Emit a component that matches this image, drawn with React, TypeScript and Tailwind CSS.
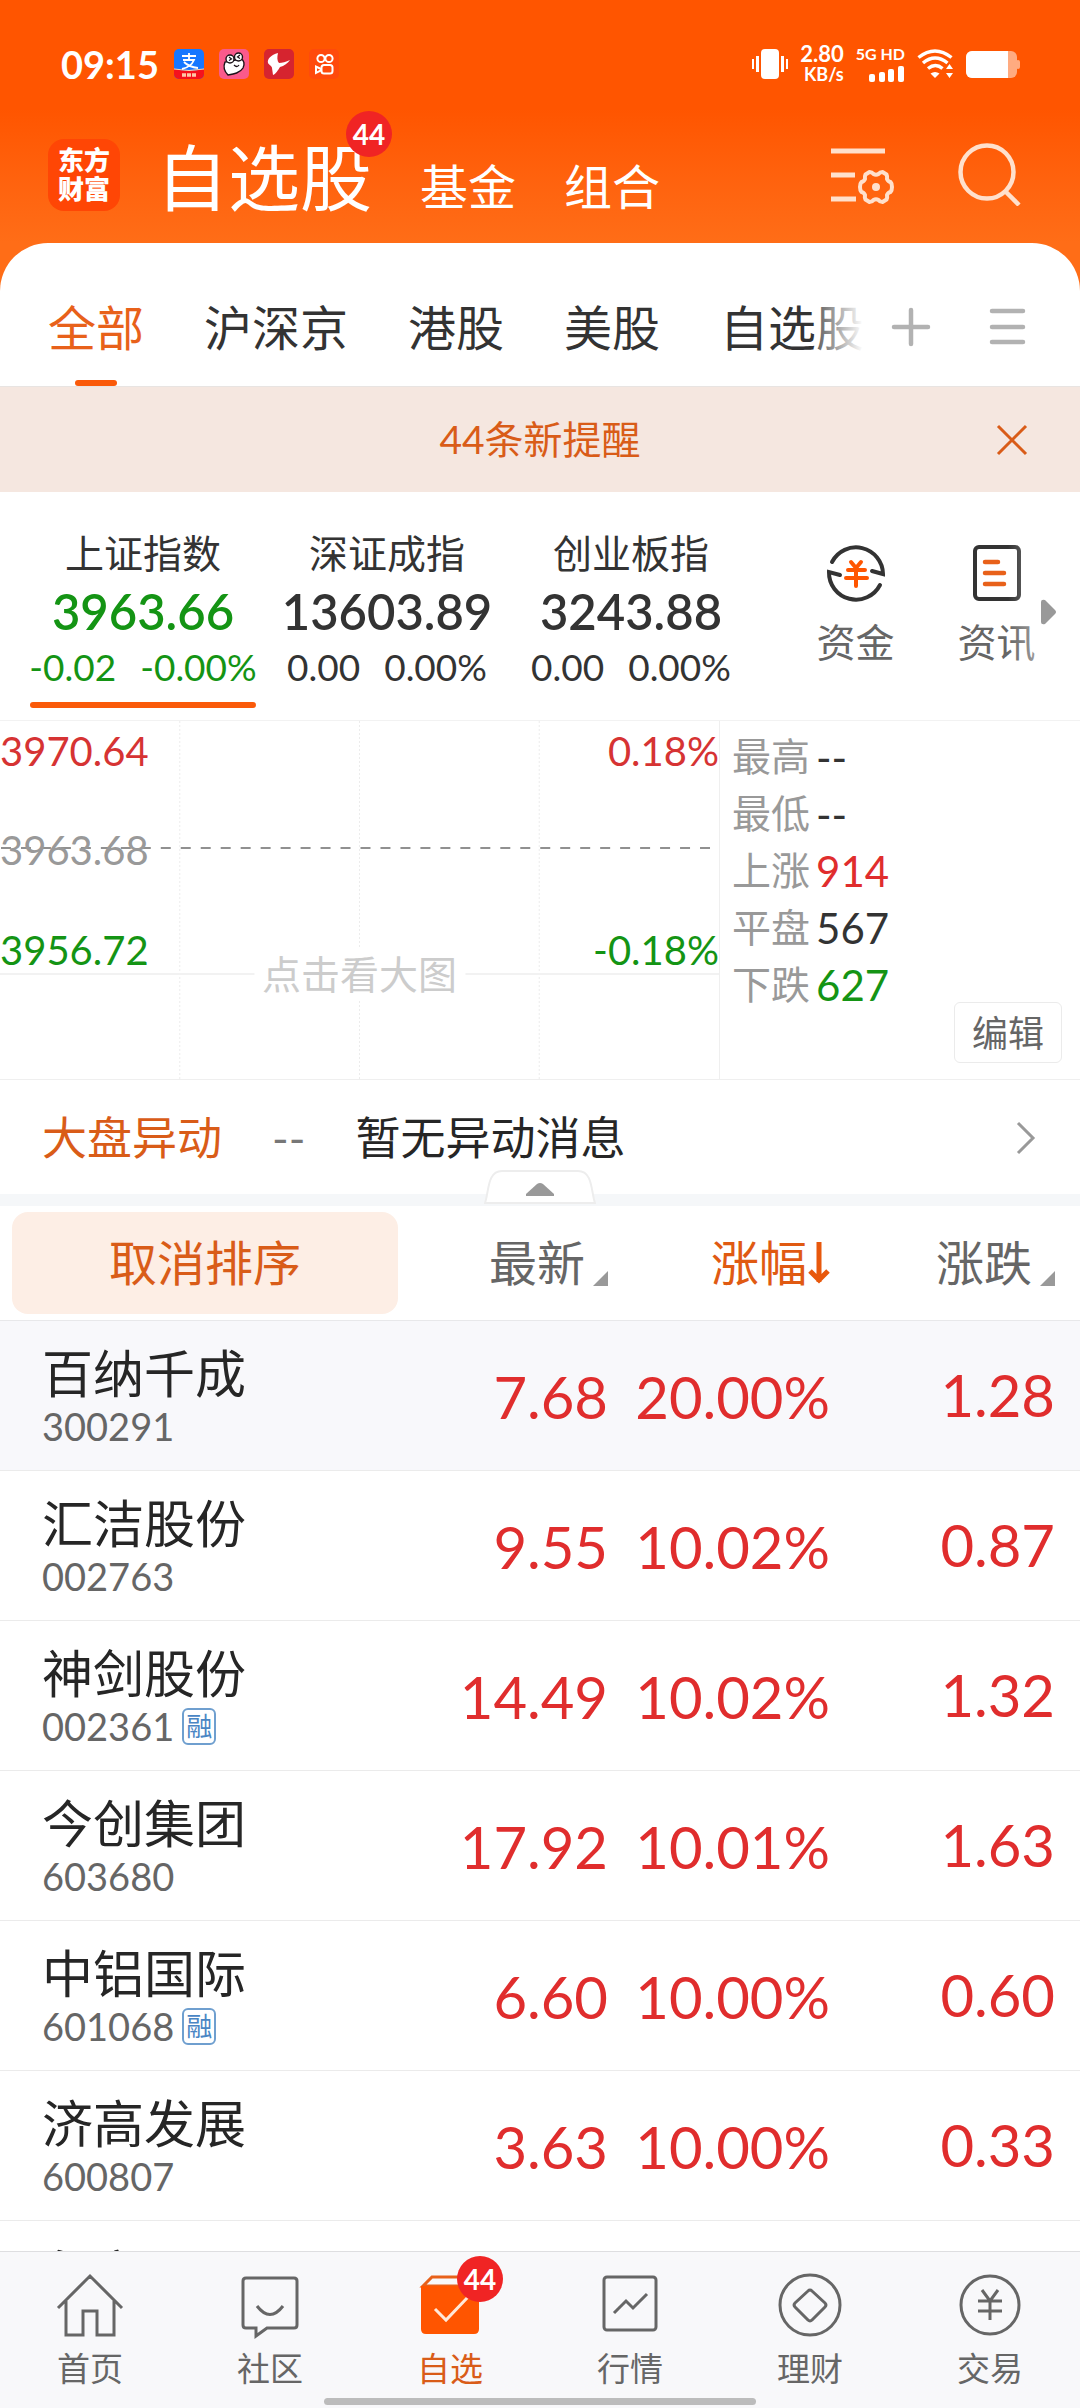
import type { ReactNode } from "react";
import { clsx } from "clsx";

type Stock = { name: string; code: string; price: string; percent: string; change: string; margin?: boolean };

const stocks: Stock[] = [
  { name: "百纳千成", code: "300291", price: "7.68", percent: "20.00%", change: "1.28" },
  { name: "汇洁股份", code: "002763", price: "9.55", percent: "10.02%", change: "0.87" },
  { name: "神剑股份", code: "002361", price: "14.49", percent: "10.02%", change: "1.32", margin: true },
  { name: "今创集团", code: "603680", price: "17.92", percent: "10.01%", change: "1.63" },
  { name: "中铝国际", code: "601068", price: "6.60", percent: "10.00%", change: "0.60", margin: true },
  { name: "济高发展", code: "600807", price: "3.63", percent: "10.00%", change: "0.33" },
  { name: "永安", code: "", price: "", percent: "", change: "" },
];

const indices = [
  { name: "上证指数", value: "3963.66", diff: "-0.02", percent: "-0.00%", active: true },
  { name: "深证成指", value: "13603.89", diff: "0.00", percent: "0.00%", active: false },
  { name: "创业板指", value: "3243.88", diff: "0.00", percent: "0.00%", active: false },
];

const marketStats = [
  { label: "最高", value: "--", color: "text-[#333333]" },
  { label: "最低", value: "--", color: "text-[#333333]" },
  { label: "上涨", value: "914", color: "text-[#e02d2d]" },
  { label: "平盘", value: "567", color: "text-[#333333]" },
  { label: "下跌", value: "627", color: "text-[#149414]" },
];

const tabs = ["全部", "沪深京", "港股", "美股", "自选股"];

function Badge({ children }: { children: ReactNode }) {
  return (
    <span className="absolute flex size-[46px] items-center justify-center rounded-full bg-[#f02424] text-[28px] leading-none font-bold text-white">
      {children}
    </span>
  );
}

function StatusBar() {
  return (
    <div className="flex h-32 items-center justify-between pr-[60px] pl-[61px] text-white">
      <div className="flex items-center gap-[15px]">
        <span className="text-[38px] leading-none font-bold">09:15</span>
        <svg width="30" height="30" viewBox="0 0 30 30">
          <rect width="30" height="30" rx="5" fill="#1677ff" />
          <path d="M0 20q15 3 30 0v5a5 5 0 0 1-5 5H5a5 5 0 0 1-5-5z" fill="#f5121d" />
          <path d="M0 20q15 3 30 0" stroke="#ffd9b0" strokeWidth="1" fill="none" />
          <path d="M8 7h14M15 4v7M9 11h11q-3 7-12 9M10 13q5 5 14 6" stroke="#fff" strokeWidth="1.8" fill="none" />
          <path d="M8 26h14" stroke="#ffc9a8" strokeWidth="3.5" strokeDasharray="4 1" />
        </svg>
        <svg width="30" height="30" viewBox="0 0 30 30">
          <rect width="30" height="30" rx="5" fill="#fa5a8c" />
          <path
            d="M6 13c-2 5-1 9 3 13 6-1 12-2 15-7 2-4 1-8-2-9z"
            fill="#fff"
            stroke="#1b1118"
            strokeWidth="1.4"
          />
          <circle cx="11" cy="10" r="4" fill="#fff" stroke="#1b1118" strokeWidth="1.4" />
          <circle cx="19.500" cy="8" r="4" fill="#fff" stroke="#1b1118" strokeWidth="1.4" />
          <path d="m10 8 2.500 2-2.500 1.500M21 6l-2.500 2 2.500 1.500" stroke="#1b1118" strokeWidth="1.200" fill="none" />
          <path d="M15 16q3 3 5 0" stroke="#1b1118" strokeWidth="1.300" fill="none" />
        </svg>
        <svg width="30" height="30" viewBox="0 0 30 30">
          <rect width="30" height="30" rx="5" fill="#d6242f" />
          <path d="M14 4C7 6 3 10 4 14c1 2 4 3 4 5l1 7c3-1 5-5 7-8 4-1 8-4 10-7-4 2-8 3-11 3-2-2-2-6-1-10z" fill="#fff" />
        </svg>
        <svg width="30" height="30" viewBox="0 0 30 30">
          <rect width="30" height="30" rx="5" fill="#ff4a0c" />
          <g fill="none" stroke="#fff" strokeWidth="2">
            <circle cx="12" cy="9.500" r="3.600" />
            <circle cx="20" cy="9.500" r="3.600" />
            <rect x="12.500" y="16" width="11" height="8.500" rx="2.500" />
            <path d="M12 20 7 17.500v6.500l5-2.500z" />
          </g>
        </svg>
      </div>

      <div className="flex items-center gap-3">
        <svg width="36" height="30" viewBox="0 0 36 30" fill="#fff">
          <rect x="9" width="18" height="30" rx="4" />
          <rect y="10" width="2" height="10" />
          <rect x="4" y="7" width="3" height="16" />
          <rect x="29" y="7" width="3" height="16" />
          <rect x="34" y="10" width="2" height="10" />
        </svg>
        <div className="text-right font-bold">
          <div className="text-[22px] leading-[20px]">2.80</div>
          <div className="text-[18px] leading-[20px]">KB/s</div>
        </div>
        <div className="flex flex-col items-end gap-1 text-[16px] leading-[16px] font-bold">
          5G HD
          <svg width="36" height="16" viewBox="0 0 36 16" fill="#fff">
            <rect y="8" width="6" height="8" rx="2" />
            <rect x="10" y="6" width="6" height="10" rx="2" />
            <rect x="19" y="3" width="6" height="13" rx="2" />
            <rect x="29" width="6" height="16" rx="2" />
          </svg>
        </div>
        <svg width="37" height="30" viewBox="0 0 37 30" fill="none" stroke="#fff" strokeWidth="3.500">
          <path d="M1.500 8.500q16.500-13 33 0" />
          <path d="M6 14q12-10 24.500 0" />
          <path d="M11 19.500q7.500-6 14.500 0" />
          <path d="M13.500 24.500 18 29l4.500-4.500q-4.500-3-9 0z" fill="#fff" stroke="none" />
          <path d="m32.500 15 3.500 5h-7zM32.500 29l3.500-5h-7z" fill="#fff" stroke="none" />
        </svg>
        <svg width="54" height="27" viewBox="0 0 54 27">
          <rect width="51" height="27" rx="6" fill="#ffab80" />
          <path d="M6 0h36v27H6a6 6 0 0 1-6-6V6a6 6 0 0 1 6-6z" fill="#fff" />
          <rect x="50" y="9" width="4" height="9" rx="2" fill="#ffab80" />
        </svg>
      </div>
    </div>
  );
}

function Header() {
  return (
    <header className="bg-linear-to-b from-[#ff5500] from-45% to-[#ff6d17]">
      <StatusBar />
      <div className="flex h-[115px] items-start justify-between pr-[58px] pl-12 text-white">
        <div className="flex">
          <div className="mt-[11px] flex size-[72px] flex-col items-center justify-center rounded-2xl bg-[#ff4605] text-[26px] leading-[29px] font-black">
            <span>东方</span>
            <span>财富</span>
          </div>
          <nav className="ml-9 flex items-baseline gap-12">
            <button className="relative text-[72px] leading-[98px]">
              自选股
              <span className="absolute -top-[17px] right-[26px]">
                <Badge>44</Badge>
              </span>
            </button>
            <button className="text-5xl">基金</button>
            <button className="text-5xl">组合</button>
          </nav>
        </div>
        <div className="mt-[14px] flex gap-16">
          <button aria-label="列表设置">
            <svg width="63" height="64" viewBox="0 0 63 64" fill="none" stroke="#ffe0cc" strokeWidth="5">
              <path d="M0 9h54M0 33h24M0 57h25" />
              <path
                d="M38.500 30q2.500 0 4 2 2.500 1.500 5 0 1.500-2 4-2l4 2.500q1 2 .5 4.500 1 2.500 3.500 3 1.500 1.500 1.500 5t-1.500 5q-2.500.5-3.500 3 .5 2.500-.5 4.500l-4 2.500q-2.500 0-4-2-2.500-1.500-5 0-1.500 2-4 2l-4-2.500q-1-2-.5-4.500-1-2.500-3.500-3-1.500-1.500-1.500-5t1.500-5q2.500-.5 3.500-3-.5-2.500.5-4.500z"
                strokeWidth="4"
                strokeLinejoin="round"
              />
              <circle cx="45" cy="45" r="4" fill="#ffe0cc" stroke="none" />
            </svg>
          </button>
          <button aria-label="搜索">
            <svg width="64" height="64" viewBox="0 0 64 64" fill="none" stroke="#ffe0cc" strokeWidth="4.500">
              <circle cx="29" cy="30" r="26.500" />
              <path d="m47 49 14 14" />
            </svg>
          </button>
        </div>
      </div>
    </header>
  );
}

function GroupTabs() {
  return (
    <div className="flex h-36 items-center border-b border-[#e8e4e2] pr-[53px]">
      <div className="relative flex h-full min-w-0 flex-1 overflow-hidden">
        <div className="flex h-full gap-[60px] pl-12">
          {tabs.map((tab, i) => (
            <button
              key={tab}
              className={clsx(
                "relative h-full shrink-0 pt-[26px] text-5xl whitespace-nowrap",
                i === 0 ? "text-[#e8611a]" : "text-[#333333]",
              )}
            >
              {tab}
              {i === 0 && (
                <span className="absolute bottom-0 left-1/2 h-1.5 w-[42px] -translate-x-1/2 rounded-full bg-[#fa5a0a]" />
              )}
            </button>
          ))}
        </div>
        <div className="absolute inset-y-0 right-0 w-[48px] bg-linear-to-r from-white/20 to-white" />
      </div>
      <div className="ml-7 flex gap-14 pt-6">
        <button aria-label="添加分组">
          <svg width="40" height="40" viewBox="0 0 40 40" stroke="#b2b2b2" strokeWidth="4.500" strokeLinecap="round">
            <path d="M3 20h34M20 3v34" />
          </svg>
        </button>
        <button aria-label="分组管理">
          <svg width="40" height="40" viewBox="0 0 40 40" stroke="#b2b2b2" strokeWidth="4.500" strokeLinecap="round">
            <path d="M5 4h31M5 20h31M5 35h31" />
          </svg>
        </button>
      </div>
    </div>
  );
}

function AlertBar() {
  return (
    <div className="relative flex h-[105px] items-center justify-center bg-[#f5e7e0] text-[39px] text-[#d95c18]">
      44条新提醒
      <button aria-label="关闭" className="absolute right-[52px]">
        <svg width="32" height="32" viewBox="0 0 32 32" stroke="#d95c18" strokeWidth="3">
          <path d="m2 2 28 28M30 2 2 30" />
        </svg>
      </button>
    </div>
  );
}

function IndexStrip() {
  return (
    <section className="flex border-b border-[#f2f2f2] pl-[21px]">
      {indices.map((item) => (
        <button
          key={item.name}
          className={clsx(
            "flex w-[244px] flex-col items-center pt-[35px] pb-3",
            item.active ? "text-[#149414]" : "text-[#333333]",
          )}
        >
          <span className="text-[39px] leading-[52px] text-[#333333]">{item.name}</span>
          <span className="text-[49px] leading-[64px] font-semibold">{item.value}</span>
          <span className="flex gap-6 text-[37px] leading-[48px]">
            <span>{item.diff}</span>
            <span>{item.percent}</span>
          </span>
          <span className={clsx("mt-[11px] h-1.5 w-[226px] rounded-full", item.active && "bg-[#fa5a0a]")} />
        </button>
      ))}
      <div className="relative flex flex-1 pt-[50px] pl-[32px] text-[39px] text-[#666666]">
        <button className="flex w-[141px] flex-col items-center gap-3">
          <svg width="62" height="62" viewBox="0 0 62 62" fill="none" stroke="#333" strokeWidth="4" strokeLinecap="round">
            <path d="M7 20A27 27 0 0 1 58 32l-11-3" />
            <path d="M55 43A27 27 0 0 1 4 30l11 3" />
            <path d="m26 20 5 6 5-6M23 28h17M21 36h21M31 27v17" stroke="#ff5500" />
          </svg>
          <span className="leading-[52px]">资金</span>
        </button>
        <button className="flex w-[141px] flex-col items-center gap-3">
          <svg width="62" height="62" viewBox="0 0 62 62" fill="none" stroke="#333" strokeWidth="4" strokeLinecap="round">
            <rect x="9" y="5" width="44" height="52" rx="4" />
            <path d="M19 20h13M19 31h19M19 42h19" stroke="#e8611a" strokeWidth="4.500" />
          </svg>
          <span className="leading-[52px]">资讯</span>
        </button>
        <div className="absolute inset-y-0 right-[24px] w-[48px] bg-linear-to-r from-white/0 to-white/60" />
        <svg className="absolute top-[106px] right-6" width="15" height="28" viewBox="0 0 15 28" fill="#999">
          <path d="M0 4q0-3 4-2l10 10q2 2 0 4L4 26q-4 1-4-2z" />
        </svg>
      </div>
    </section>
  );
}

function MarketChart() {
  return (
    <section className="flex h-[359px] border-b border-[#efefef]">
      <button className="relative w-2/3 border-r border-[#efefef] text-[40px] leading-[50px]">
        <svg className="absolute inset-0 size-full" viewBox="0 0 720 358" preserveAspectRatio="none">
          <path d="M180 0v358M360 0v358M540 0v358" stroke="#ececec" strokeDasharray="2 2" />
          <path d="M0 253h720" stroke="#f2f2f2" strokeWidth="2" />
          <path d="M1 127h711" stroke="#909090" strokeWidth="2" strokeDasharray="10 10" />
        </svg>
        <span className="absolute top-[5px] left-0 text-[#d63333]">3970.64</span>
        <span className="absolute top-[5px] right-0 text-[#d63333]">0.18%</span>
        <span className="absolute top-[104px] left-0 text-[#999999]">3963.68</span>
        <span className="absolute top-[204px] left-0 text-[#149414]">3956.72</span>
        <span className="absolute top-[204px] right-0 text-[#149414]">-0.18%</span>
        <span className="absolute top-[228px] left-1/2 -translate-x-1/2 bg-white px-2 text-[39px] whitespace-nowrap text-[#cccccc]">
          点击看大图
        </span>
      </button>
      <div className="relative flex-1 pt-[7px] pl-3">
        <dl>
          {marketStats.map((stat) => (
            <div key={stat.label} className="flex h-[57px] items-center gap-1.5">
              <dt className="text-[39px] leading-none text-[#999999]">{stat.label}</dt>
              <dd className={clsx("text-[42px] leading-none", stat.color)}>{stat.value}</dd>
            </div>
          ))}
        </dl>
        <button className="absolute right-[18px] bottom-[16px] h-[61px] w-[108px] rounded-md border border-[#ebebeb] bg-white text-[36px] leading-none text-[#666666]">
          编辑
        </button>
      </div>
    </section>
  );
}

function NewsRow() {
  return (
    <section className="relative border-b-[12px] border-[#f5f7f9]">
      <a href="#news" className="flex h-[114px] items-center pt-0.5 pr-11 pl-[42px] text-[45px] leading-none">
        <span className="text-[#d95c18]">大盘异动</span>
        <span className="ml-[50px] text-[#777777]">--</span>
        <span className="ml-[50px] text-[#262626]">暂无异动消息</span>
        <svg className="ml-auto" width="20" height="34" viewBox="0 0 20 34" fill="none" stroke="#999" strokeWidth="3">
          <path d="m2 2 15 15L2 32" />
        </svg>
      </a>
      <button aria-label="收起" className="absolute -bottom-[10px] left-1/2 -translate-x-1/2">
        <svg width="112" height="34" viewBox="0 0 112 34">
          <path d="M1 33C5 22 3 1 18 1h76c15 0 13 21 17 32z" fill="#fff" stroke="#ededed" strokeWidth="2" />
          <path d="M42 24 53 14q3-2 6 0l11 10v2H42z" fill="#999" />
        </svg>
      </button>
    </section>
  );
}

function SortMark() {
  return (
    <svg className="mt-8" width="15" height="15" viewBox="0 0 15 15" fill="#999">
      <path d="M15 0v15H0z" />
    </svg>
  );
}

function StockTable() {
  return (
    <div className="min-h-0 flex-1 overflow-hidden">
      <table className="w-full table-fixed">
        <colgroup>
          <col />
          <col className="w-[210px]" />
          <col className="w-[222px]" />
          <col className="w-[250px]" />
        </colgroup>
        <thead className="text-5xl text-[#666666]">
          <tr className="h-[114px] border-b border-[#e8e8ea] bg-white">
            <th className="p-0 pl-3 font-normal">
              <button className="h-[102px] w-full rounded-2xl bg-[#fdeee5] text-[#d95c18]">取消排序</button>
            </th>
            <th className="p-0 font-normal">
              <button className="ml-auto flex items-center gap-2">
                最新
                <SortMark />
              </button>
            </th>
            <th className="p-0 font-normal">
              <button className="ml-auto flex items-center text-[#e05a12]">
                涨幅
                <svg width="23" height="44" viewBox="0 0 23 44" fill="none" stroke="#e8580c" strokeWidth="5">
                  <path d="M12 1v40M3 30l9 9 9-9" />
                </svg>
              </button>
            </th>
            <th className="p-0 pr-[25px] font-normal">
              <button className="ml-auto flex items-center gap-2">
                涨跌
                <SortMark />
              </button>
            </th>
          </tr>
        </thead>
        <tbody>
          {stocks.map((stock, i) => (
            <tr
              key={stock.name}
              className={clsx(
                "h-[150px] border-b border-[#ebebeb] text-right text-[58px] leading-none text-[#e02d2d]",
                i === 0 && "bg-[#f8f8fb]",
              )}
            >
              <td className="p-0 pt-1 pl-[42px] text-left">
                <div className="text-[51px] leading-[58px] text-[#262626]">{stock.name}</div>
                <div className="flex h-[46px] items-center gap-2 text-[38px] leading-none text-[#666666]">
                  {stock.code}
                  {stock.margin && (
                    <span className="flex h-[37px] w-[34px] items-center justify-center rounded-md border-2 border-[#6f9fcf] text-[26px] text-[#4a86c4]">
                      融
                    </span>
                  )}
                </div>
              </td>
              <td className="p-0 pt-1">{stock.price}</td>
              <td className="p-0 pt-1">{stock.percent}</td>
              <td className="p-0 pr-[25px]">{stock.change}</td>
            </tr>
          ))}
        </tbody>
      </table>
    </div>
  );
}

const navItems: { label: string; icon: ReactNode; active?: boolean }[] = [
  {
    label: "首页",
    icon: <path d="M2 35 34 3l32 32M10 28v34h17V38h14v24h17V28" />,
  },
  {
    label: "社区",
    icon: (
      <>
        <path d="M10 5h48q3 0 3 3v44q0 3-3 3H31l-11 8v-8H10q-3 0-3-3V8q0-3 3-3z" />
        <path d="M21 33q13 17 26 0" />
      </>
    ),
  },
  {
    label: "自选",
    active: true,
    icon: (
      <>
        <path d="M7 13 16 4h36l9 9z" stroke="#e8611a" />
        <path d="M5 13h58v43q0 5-5 5H10q-5 0-5-5z" fill="#ff5500" stroke="none" />
        <path d="m19 36 11 11 22-23" stroke="#ffe8d8" />
      </>
    ),
  },
  {
    label: "行情",
    icon: (
      <>
        <rect x="8" y="4" width="52" height="53" rx="3" />
        <path d="m18 40 12-12 7 7 14-14" />
      </>
    ),
  },
  {
    label: "理财",
    icon: (
      <>
        <circle cx="34" cy="32" r="30" />
        <path d="m32 18-13 12q-2 2 0 4l13 13q2 2 4 0l13-13q2-2 0-4L36 18q-2-2-4 0z" />
      </>
    ),
  },
  {
    label: "交易",
    icon: (
      <>
        <circle cx="34" cy="32" r="29" />
        <path d="m26 17 8 11 8-11M22 28h24M22 38h24M34 27v20" />
      </>
    ),
  },
];

function BottomNav() {
  return (
    <nav className="relative grid h-[157px] shrink-0 grid-cols-6 border-t border-[#dedee0] bg-[#f8f8fa]">
      {navItems.map((item) => (
        <a
          key={item.label}
          href={`#${item.label}`}
          className={clsx(
            "flex flex-col items-center pt-[21px] text-[33px] leading-[46px]",
            item.active ? "text-[#d95c18]" : "text-[#666666]",
          )}
        >
          <span className="relative">
            <svg width="68" height="68" viewBox="0 0 68 68" fill="none" stroke="currentColor" strokeWidth="3">
              {item.icon}
            </svg>
            {item.active && (
              <span className="absolute -top-[17px] left-[41px]">
                <Badge>44</Badge>
              </span>
            )}
          </span>
          <span className="mt-1">{item.label}</span>
        </a>
      ))}
      <span className="absolute bottom-[3px] left-[30%] h-[7px] w-2/5 rounded-full bg-[#bcbcbc]" />
    </nav>
  );
}

export default function App() {
  return (
    <div className="flex h-screen flex-col overflow-hidden bg-[#ff6d17] font-['Lato','Noto_Sans_CJK_SC',sans-serif]">
      <Header />
      <main className="flex min-h-0 flex-1 flex-col overflow-hidden rounded-t-[48px] bg-white">
        <GroupTabs />
        <AlertBar />
        <IndexStrip />
        <MarketChart />
        <NewsRow />
        <StockTable />
      </main>
      <BottomNav />
    </div>
  );
}
